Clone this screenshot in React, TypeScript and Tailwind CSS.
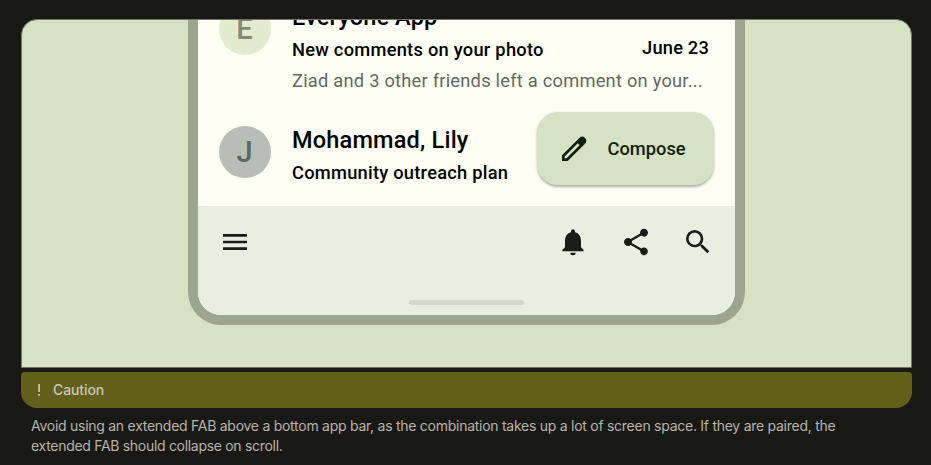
import React from "react";
import { MdMenu, MdNotifications, MdShare, MdSearch } from "react-icons/md";

function Avatar({ letter, tone }: { letter: string; tone: string }) {
  return (
    <div className={`flex size-[52px] shrink-0 items-center justify-center rounded-full pr-px text-[29px] leading-none font-medium ${tone}`}>
      {letter}
    </div>
  );
}

function BottomAppBar() {
  return (
    <div className="flex h-[109px] flex-col items-center justify-between bg-[#eaeee0] pt-5 pb-[10px] text-[#191c18]">
      <div className="flex w-full items-center pr-[21px] pl-[21px]">
        <MdMenu className="size-8" />
        <div className="ml-auto flex gap-[30.5px]">
          <MdNotifications className="size-8" />
          <MdShare className="size-8" />
          <MdSearch className="size-8" />
        </div>
      </div>
      <div className="h-[5px] w-[115px] rounded-full bg-[#d3d7ca]" />
    </div>
  );
}

function ComposeButton() {
  return (
    <button className="absolute top-[92px] right-[21px] flex h-[73px] w-[177px] items-center rounded-[21px] bg-[#d5e3c4] pl-[21px] text-[18.3px] font-medium text-[#121f0e] shadow-[0_1.5px_2.5px_rgba(0,0,0,0.3)]">
      <svg viewBox="0 0 24 24" className="size-8" fill="currentColor">
        <path d="M3 21v-4.25L16 3.75a3 3 0 0 1 4.25 4.25L7.25 21zm2-2h1.4l9.825-9.8l-1.425-1.425L5 17.6z" />
      </svg>
      <span className="ml-[17.5px]">Compose</span>
    </button>
  );
}

function Phone() {
  return (
    <div className="relative flex h-[305px] w-[557px] flex-col overflow-hidden rounded-b-[33px] border-x-[10px] border-b-[10px] border-[#9ca590] bg-[#fefef4] font-[Roboto,sans-serif] text-black">
      <div className="flex h-[186px] flex-col gap-[30px]">
        <div className="-mt-[18px] flex gap-[21px] pl-[21px]">
          <div className="pt-px">
            <Avatar letter="E" tone="bg-[#e2ebcd] text-[#838b76]" />
          </div>
          <div className="flex w-[417px] flex-col whitespace-nowrap">
            <div className="text-[23.5px] leading-[30px] font-medium tracking-[0.15px]">Everyone App</div>
            <div className="mt-[3px] flex h-[30px] justify-between text-[18.3px] leading-[30px] font-medium tracking-[0.25px]">
              <span>New comments on your photo</span>
              <span className="-mt-0.5 tracking-[0.18px]">June 23</span>
            </div>
            <div className="mt-px text-[18.3px] leading-[30px] tracking-[0.23px] text-[#626962]">
              Ziad and 3 other friends left a comment on your...
            </div>
          </div>
        </div>
        <div className="flex gap-[21px] pl-[21px]">
          <Avatar letter="J" tone="bg-[#b8beb6] text-[#5d675c]" />
          <div className="-mt-px flex flex-col gap-[3px] whitespace-nowrap">
            <div className="text-[23.5px] leading-[30px] font-medium tracking-[0.2px]">Mohammad, Lily</div>
            <div className="text-[18.3px] leading-[30px] font-medium tracking-[0.25px]">Community outreach plan</div>
          </div>
        </div>
      </div>
      <BottomAppBar />
      <ComposeButton />
    </div>
  );
}

export default function App() {
  return (
    <div className="h-[465px] w-[931px] overflow-hidden bg-[#181914] pt-[19px] pl-[21px] font-[Inter,sans-serif]">
      <div className="flex h-[349px] w-[891px] justify-center overflow-hidden rounded-t-2xl border border-[#777264] bg-[#d5e3c4]">
        <Phone />
      </div>
      <div className="mt-1 flex h-9 w-[891px] items-center rounded-t-sm rounded-b-2xl bg-[#60601a] pl-4 text-[14px] font-medium tracking-[-0.1px] text-[#cbc7b5]">
        <svg viewBox="0 0 4 14" className="h-[14px] w-1" fill="currentColor">
          <path d="M1.2 1h1.7v8H1.2zM1.2 11h1.7v1.8H1.2z" />
        </svg>
        <span className="-mt-0.5 ml-3">Caution</span>
      </div>
      <p className="mt-2 pl-[10px] text-[14px] leading-5 tracking-[-0.265px] whitespace-nowrap text-[#b9b3a9]">
        Avoid using an extended FAB above a bottom app bar, as the combination takes up a lot of screen space. If they are paired, the
        <br />
        <span className="tracking-[-0.3px]">extended FAB should collapse on scroll.</span>
      </p>
    </div>
  );
}
